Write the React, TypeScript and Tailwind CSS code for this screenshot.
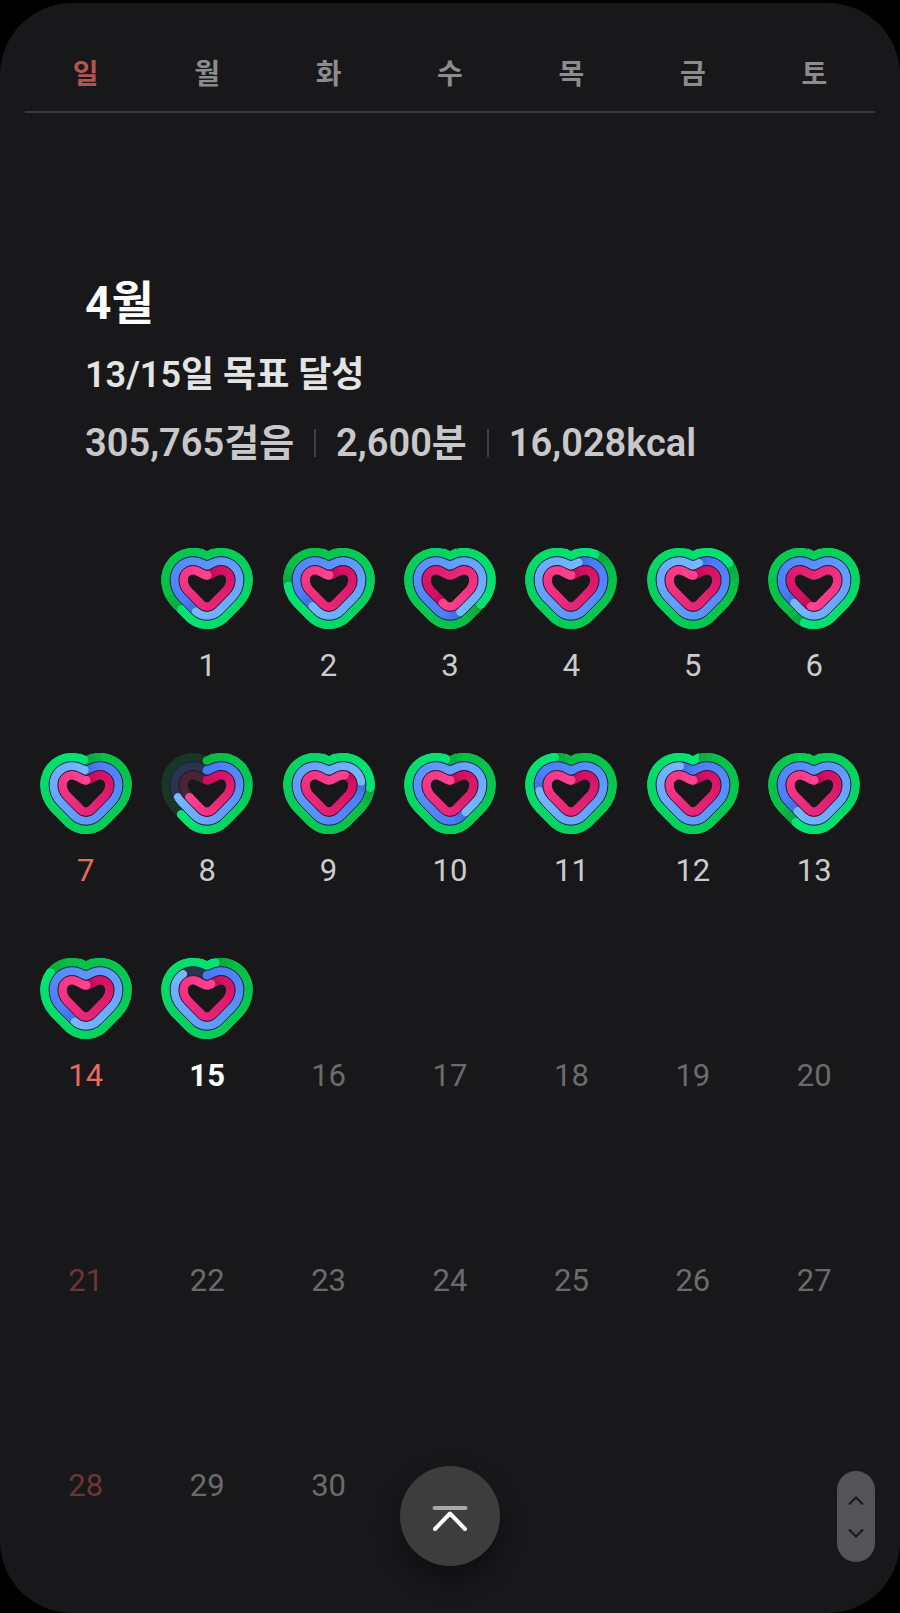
import { Fragment } from 'react'

const weekdays = ['일', '월', '화', '수', '목', '금', '토']

const stats = ['305,765걸음', '2,600분', '16,028kcal']

const TODAY = 15
const DAYS_IN_MONTH = 30
const FIRST_WEEKDAY = 1

// steps, active time and calories for each day, in percent of the goal
const progress: Record<number, [number, number, number]> = {
  1: [162.5, 156, 200],
  2: [174, 160, 200],
  3: [134.5, 144, 156],
  4: [110, 104, 200],
  5: [116, 103, 200],
  6: [154, 162.5, 152],
  7: [199, 199, 200],
  8: [62.5, 70, 67],
  9: [124.5, 121, 112],
  10: [198, 140, 200],
  11: [193, 173.5, 200],
  12: [100.5, 192.5, 200],
  13: [158, 160, 200],
  14: [184, 156, 200],
  15: [103.5, 86.5, 103],
}

type Rgb = [number, number, number]

const rings: { offset: number; track: string; from: Rgb; to: Rgb }[] = [
  { offset: 17.6, track: '#193625', from: [9, 188, 66], to: [4, 228, 116] },
  { offset: 8.8, track: '#29344f', from: [72, 122, 248], to: [117, 184, 255] },
  { offset: 0, track: '#4a2335', from: [207, 12, 94], to: [255, 67, 145] },
]

const CHUNKS = 40

// Outline of the heart, clockwise from the notch, grown outwards by `offset`
function heartPath(offset: number) {
  const lobe = 9.7 + offset
  const side = 16.3 + offset
  const tip = 8 + offset
  const p = (x: number, y: number) => `${(46 + x).toFixed(2)} ${y.toFixed(2)}`
  const notchY = 28 - offset / 0.885
  const topX = 14 - 0.465 * lobe
  const topY = 31.6 - 0.885 * lobe
  const edgeX = 14 + lobe
  const sideX = 7.4 + 0.714 * side
  const sideY = 31.6 + 0.7 * side
  const tipX = 0.714 * tip
  const tipY = 51 + 0.7 * tip
  // the notch is softened by a short curve
  const softX = Math.min(3, topX)
  const softY = notchY - softX * 0.525
  const midY = notchY - softX * 0.262
  return [
    `M${p(0, midY)}`,
    `Q${p(softX / 2, midY)} ${p(softX, softY)}`,
    `L${p(topX, topY)}`,
    `A${lobe} ${lobe} 0 0 1 ${p(edgeX, 31.6)}`,
    `A${side} ${side} 0 0 1 ${p(sideX, sideY)}`,
    `L${p(tipX, tipY)}`,
    `A${tip} ${tip} 0 0 1 ${p(-tipX, tipY)}`,
    `L${p(-sideX, sideY)}`,
    `A${side} ${side} 0 0 1 ${p(-edgeX, 31.6)}`,
    `A${lobe} ${lobe} 0 0 1 ${p(-topX, topY)}`,
    `L${p(-softX, softY)}`,
    `Q${p(-softX / 2, midY)} ${p(0, midY)}`,
    'Z',
  ].join(' ')
}

function mix(from: Rgb, to: Rgb, t: number, shade = 1) {
  const c = from.map((v, i) => Math.round((v + (to[i] - v) * t) * shade))
  return `rgb(${c.join(',')})`
}

function Ring({ value, ring }: { value: number; ring: (typeof rings)[number] }) {
  const d = heartPath(ring.offset)
  const full = value >= 100
  const head = value % 100
  const start = full ? head : 0
  const length = full ? 100 : value
  const step = length / CHUNKS
  const dash = step + 0.4
  const base = { d, pathLength: 100, fill: 'none', strokeWidth: 8.8 }

  return (
    <g>
      <path {...base} stroke={full ? mix(ring.from, ring.to, 0.4) : ring.track} strokeLinejoin="round" />
      {!full && (
        <path {...base} stroke={mix(ring.from, ring.to, 0)} strokeLinecap="round" strokeDasharray="0.1 200" />
      )}
      {Array.from({ length: CHUNKS }, (_, i) => {
        const shade = full ? Math.min(1, 0.88 + i * 0.04) : 1
        return (
          <path
            key={i}
            {...base}
            stroke={mix(ring.from, ring.to, i / CHUNKS, shade)}
            strokeDasharray={`${dash} ${100 - dash}`}
            strokeDashoffset={-(start + i * step)}
          />
        )
      })}
      <path
        {...base}
        stroke={mix(ring.from, ring.to, 1)}
        strokeLinecap="round"
        strokeDasharray="0.1 200"
        strokeDashoffset={-head}
      />
    </g>
  )
}

function HeartRings({ values }: { values: [number, number, number] }) {
  return (
    <svg viewBox="0 0 92 82" className="mx-auto h-[82px] w-[92px] overflow-visible" aria-hidden="true">
      {rings.map((ring, i) => (
        <Ring key={ring.offset} ring={ring} value={values[i]} />
      ))}
      <path d={heartPath(13.2)} fill="none" stroke="#14234a" strokeWidth={1} />
      <path d={heartPath(4.4)} fill="none" stroke="#221440" strokeWidth={1} />
    </svg>
  )
}

function dayColor(day: number, column: number) {
  if (day === TODAY) return 'font-bold text-white'
  if (day > TODAY) return column === 0 ? 'text-[#6b3533]' : 'text-[#6b6b6d]'
  return column === 0 ? 'text-[#e66b60]' : 'text-[#cbcbcc]'
}

const weeks = Array.from({ length: 5 }, (_, w) =>
  Array.from({ length: 7 }, (_, c) => {
    const day = w * 7 + c - FIRST_WEEKDAY + 1
    return day >= 1 && day <= DAYS_IN_MONTH ? day : null
  })
)

export default function App() {
  return (
    <div className="flex min-h-screen flex-col bg-black pt-[3px] font-[Roboto,'Noto_Sans_CJK_KR',sans-serif]">
      <main className="relative flex-1 rounded-[72px] bg-[#18181a] px-[25px] pb-9">
        {/* Weekday header */}
        <div className="grid grid-cols-7 border-b-2 border-[#38383a] pt-[52px] pb-4 text-center text-[28px] leading-10 font-bold">
          {weekdays.map((name, i) => (
            <span key={name} className={i === 0 ? 'text-[#b0554f]' : 'text-[#8c8c8d]'}>
              {name}
            </span>
          ))}
        </div>

        {/* Month summary */}
        <section className="px-[60px] pt-[158px]">
          <h1 className="text-[46px] leading-[64px] font-bold text-white">4월</h1>
          <p className="mt-2 text-[36px] leading-[64px] font-semibold text-[#e4e4e4]">13/15일 목표 달성</p>
          <div className="mt-1 flex items-center text-[38px] leading-[64px] font-semibold text-[#c8c8ca]">
            {stats.map((stat, i) => (
              <Fragment key={stat}>
                {i > 0 && <span className="mx-5 h-7 w-0.5 bg-[#404042]" />}
                <span>{stat}</span>
              </Fragment>
            ))}
          </div>
        </section>

        {/* Days */}
        <table className="mt-[73px] w-full table-fixed">
          <tbody>
            {weeks.map((week, w) => (
              <tr key={w} className="h-[205px]">
                {week.map((day, c) => (
                  <td key={c} className="p-0 text-center align-top">
                    {day && (
                      <>
                        <div className="h-[82px]">{progress[day] && <HeartRings values={progress[day]} />}</div>
                        <div className={`mt-4 text-[31px] leading-10 ${dayColor(day, c)}`}>{day}</div>
                      </>
                    )}
                  </td>
                ))}
              </tr>
            ))}
          </tbody>
        </table>

        <button
          type="button"
          aria-label="맨 위로"
          className="absolute bottom-[47px] left-1/2 flex size-[100px] -translate-x-1/2 items-center justify-center rounded-full bg-[#3d3d3d] shadow-[0_12px_24px_rgba(0,0,0,0.4)]"
        >
          <svg viewBox="0 0 40 30" className="mt-1 h-[30px] w-10" fill="none" strokeWidth={4} strokeLinecap="round">
            <path d="M4.5 5h31" stroke="#a8a8a8" />
            <path d="M5 26 20 10.5 35 26" stroke="#fff" strokeLinejoin="round" />
          </svg>
        </button>

        <button
          type="button"
          aria-label="스크롤"
          className="absolute right-[25px] bottom-[51px] flex h-[91px] w-[38px] flex-col items-center justify-center gap-[22px] rounded-full bg-[#545456]"
        >
          <svg viewBox="0 0 16 10" className="h-2.5 w-4" fill="none" stroke="#18181a" strokeWidth={2}>
            <path d="M1 8.5 8 1.5 15 8.5" />
          </svg>
          <svg viewBox="0 0 16 10" className="h-2.5 w-4" fill="none" stroke="#18181a" strokeWidth={2}>
            <path d="M1 1.5 8 8.5 15 1.5" />
          </svg>
        </button>
      </main>
    </div>
  )
}
